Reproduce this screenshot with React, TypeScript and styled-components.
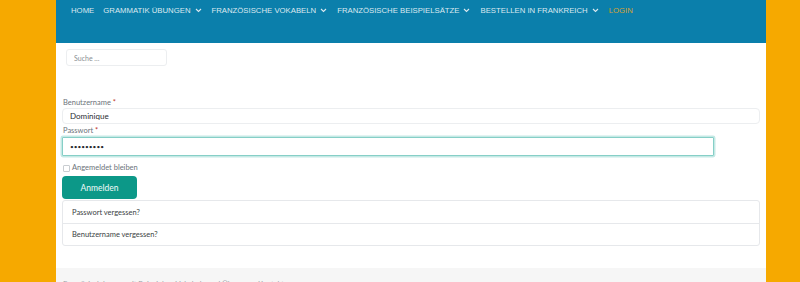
import styled, { createGlobalStyle } from 'styled-components'

const navItems = [
  { label: 'Home', sub: false },
  { label: 'Grammatik Übungen', sub: true },
  { label: 'Französische Vokabeln', sub: true },
  { label: 'Französische Beispielsätze', sub: true },
  { label: 'Bestellen in Frankreich', sub: true },
]

export default function App() {
  return (
    <>
      <GlobalStyle />
      <Page>
        <Header>
          <Nav>
            {navItems.map((item) => (
              <NavItem key={item.label}>
                {item.label}
                {item.sub && <Chevron />}
              </NavItem>
            ))}
            <NavItem $active>Login</NavItem>
          </Nav>
        </Header>

        <Main>
          <Search placeholder="Suche ..." />

          <Form>
            <Label>Benutzername <Req>*</Req></Label>
            <Input defaultValue="Dominique" />
            <Label>Passwort <Req>*</Req></Label>
            <Input type="password" defaultValue="123456789" $focus $width="652px" />
            <Remember>
              <Check type="checkbox" />
              Angemeldet bleiben
            </Remember>
            <Submit type="button">Anmelden</Submit>
          </Form>

          <Links>
            <LinkItem>Passwort vergessen?</LinkItem>
            <LinkItem>Benutzername vergessen?</LinkItem>
          </Links>
        </Main>

        <Footer>
          <FooterText>Französisch lernen mit Beispielen, Vokabeln und Übungen · Kontakt</FooterText>
        </Footer>
      </Page>
    </>
  )
}

function Chevron() {
  return (
    <svg width="7" height="5" viewBox="0 0 7 5" fill="none" style={{ marginRight: 1 }}>
      <path d="M1 1l2.5 2.5L6 1" stroke="#dce9f0" strokeWidth="1.1" />
    </svg>
  )
}

const GlobalStyle = createGlobalStyle`
  html, body { margin: 0; padding: 0; }
  body { background: #f6a900; height: 282px; overflow: hidden; }
  * { box-sizing: border-box; }
`

const Page = styled.div`
  width: 710px; margin-left: 56px; background: #fff;
  min-height: 282px; display: flex; flex-direction: column;
`
const Header = styled.header`
  height: 43px; background: #0b7fab; padding: 5px 0 0 15px;
`
const Nav = styled.nav`display: flex; align-items: center; gap: 9px;`
const NavItem = styled.a<{ $active?: boolean }>`
  display: flex; align-items: center; gap: 4px;
  font-family: "Liberation Sans", Arial, sans-serif;
  font-size: 7.75px; line-height: 11px; text-transform: uppercase;
  color: ${({ $active }) => ($active ? '#d6a235' : '#dce9f0')};
`
const Main = styled.main`
  padding: 6px 6px 22px 6px; display: flex; flex-direction: column;
`
const Search = styled.input`
  width: 101px; height: 17px; margin-left: 4px;
  border: 1px solid #eceef0; border-radius: 3px; padding: 0 7px;
  font-family: Lato, sans-serif; font-size: 7px; color: #666;
  &::placeholder { color: #8a8f94; }
`
const Form = styled.form`
  margin-top: 32px; display: flex; flex-direction: column; align-items: flex-start;
`
const Label = styled.label`
  font-family: Lato, sans-serif; font-size: 7.5px; line-height: 10px;
  color: #6c737a; margin-left: 1px;
`
const Req = styled.span`color: #c0392b;`
const Input = styled.input<{ $focus?: boolean; $width?: string }>`
  width: ${({ $width }) => $width || '698px'};
  height: ${({ $focus }) => ($focus ? '19px' : '16px')};
  margin: ${({ $focus }) => ($focus ? '1px 0 5px' : '0 0 2px')};
  border: 1px solid ${({ $focus }) => ($focus ? '#86cfc7' : '#eceef0')};
  box-shadow: ${({ $focus }) => ($focus ? '0 0 0 1.5px #c5e9e5' : 'none')};
  border-radius: ${({ $focus }) => ($focus ? '1px' : '4px')};
  padding: 0 7px; outline: none;
  font-family: Lato, sans-serif; color: #2a2d31;
  font-size: ${({ type }) => (type === 'password' ? '6.5px' : '8px')};
`
const Remember = styled.label`
  display: flex; align-items: center; gap: 2px; margin: 2px 0 3px 1px;
  font-family: Lato, sans-serif; font-size: 7.5px; line-height: 10px; color: #6c737a;
`
const Check = styled.input`
  appearance: none; width: 7px; height: 7px; margin: 0;
  border: 1px solid #c9cdd1; border-radius: 1px; background: #fff;
`
const Submit = styled.button`
  width: 75px; height: 23px; border: none; border-radius: 4px;
  background: #0c9888; color: #f2fbfa;
  font-family: Lato, sans-serif; font-size: 8.5px;
`
const Links = styled.div`
  margin-top: 1px; width: 698px; border: 1px solid #e6e8eb; border-radius: 3px;
  display: flex; flex-direction: column;
`
const LinkItem = styled.a`
  height: 22px; display: flex; align-items: center; padding-left: 9px;
  font-family: Lato, sans-serif; font-size: 7.5px; color: #3b3f44;
  & + & { border-top: 1px solid #e6e8eb; }
`
const Footer = styled.footer`
  flex: 1; background: #f6f6f6; padding: 12px 0 0 7px;
`
const FooterText = styled.p`
  margin: 0; font-family: Lato, sans-serif; font-size: 7.5px; color: #9aa0a5;
`
